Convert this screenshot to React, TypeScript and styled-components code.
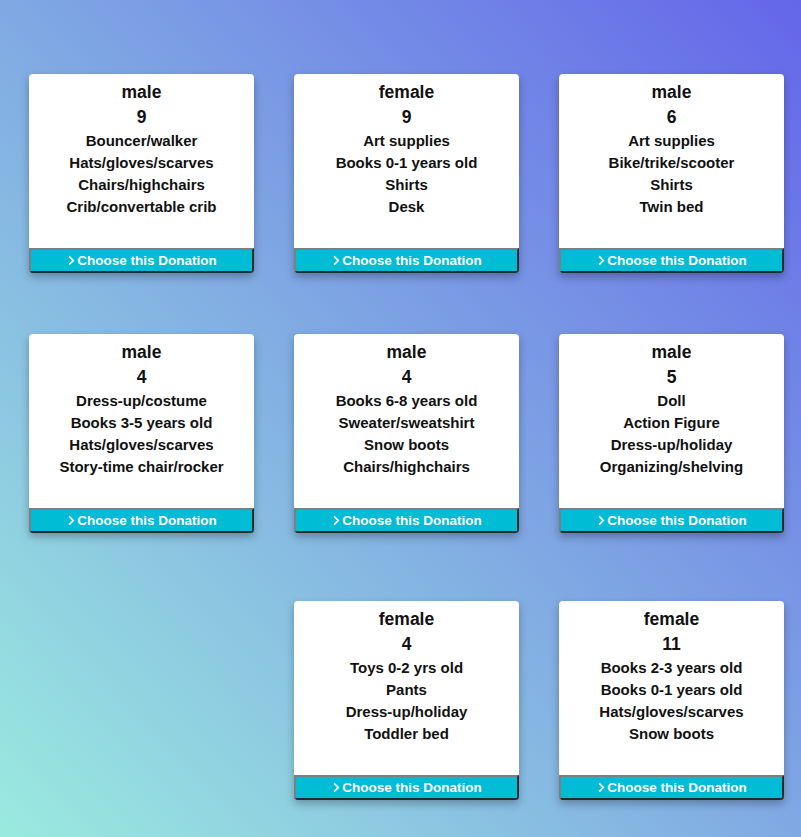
import React from 'react'
import styled, { createGlobalStyle } from 'styled-components'
import { FaChevronRight } from 'react-icons/fa'

const GlobalStyle = createGlobalStyle`
    html, body {
        margin: 0;
        padding: 0;
    }
    body {
        font-family: 'Liberation Sans', Arial, sans-serif;
        min-height: 837px;
        background: linear-gradient(to top right, #9aeadf 0%, #80a9e3 50%, #6466e9 100%);
        background-attachment: fixed;
    }
`

const Page = styled.main`
    width: 801px;
    height: 837px;
    box-sizing: border-box;
    padding: 74px 0 0 29px;
    overflow: hidden;
`

const Grid = styled.div`
    display: grid;
    grid-template-columns: repeat(3, 225px);
    column-gap: 40px;
    row-gap: 61px;
`

const Card = styled.div<{ $col?: number; $drop?: number }>`
    grid-column: ${(p) => p.$col ?? 'auto'};
    margin-top: ${(p) => p.$drop ?? 0}px;
    height: 199px;
    background: #fff;
    border-radius: 4px;
    box-shadow: 0 4px 9px rgba(0, 0, 0, 0.28);
    display: flex;
    flex-direction: column;
    overflow: hidden;
    color: #111;
    text-align: center;
`

const Body = styled.div`
    flex: 1;
    padding-top: 6px;
`

const Gender = styled.div`
    font-size: 17.5px;
    font-weight: bold;
    line-height: 25px;
`

const Age = styled.div`
    font-size: 17.5px;
    font-weight: bold;
    line-height: 25px;
`

const Item = styled.div`
    font-size: 15px;
    font-weight: bold;
    line-height: 22px;
`

const ChooseButton = styled.button`
    height: 25px;
    width: 100%;
    margin: 0;
    padding: 0;
    background: #00bcd4;
    color: #fff;
    font-family: 'Liberation Sans', Arial, sans-serif;
    font-size: 13.5px;
    font-weight: bold;
    border-style: solid;
    border-width: 2px;
    border-color: #7b7f82 #1d2b30 #1d2b30 #7b7f82;
    border-radius: 0;
    display: flex;
    align-items: center;
    justify-content: center;
    cursor: pointer;
`

type Donation = {
    gender: string
    age: number
    items: string[]
}

const donations: Donation[] = [
    { gender: 'male', age: 9, items: ['Bouncer/walker', 'Hats/gloves/scarves', 'Chairs/highchairs', 'Crib/convertable crib'] },
    { gender: 'female', age: 9, items: ['Art supplies', 'Books 0-1 years old', 'Shirts', 'Desk'] },
    { gender: 'male', age: 6, items: ['Art supplies', 'Bike/trike/scooter', 'Shirts', 'Twin bed'] },
    { gender: 'male', age: 4, items: ['Dress-up/costume', 'Books 3-5 years old', 'Hats/gloves/scarves', 'Story-time chair/rocker'] },
    { gender: 'male', age: 4, items: ['Books 6-8 years old', 'Sweater/sweatshirt', 'Snow boots', 'Chairs/highchairs'] },
    { gender: 'male', age: 5, items: ['Doll', 'Action Figure', 'Dress-up/holiday', 'Organizing/shelving'] },
    { gender: 'female', age: 4, items: ['Toys 0-2 yrs old', 'Pants', 'Dress-up/holiday', 'Toddler bed'] },
    { gender: 'female', age: 11, items: ['Books 2-3 years old', 'Books 0-1 years old', 'Hats/gloves/scarves', 'Snow boots'] },
]

const App = () => {
    return (
        <>
            <GlobalStyle />
            <Page>
                <Grid>
                    {donations.map((d, i) => (
                        <Card key={i} $col={i === 6 ? 2 : undefined} $drop={i >= 6 ? 7 : 0}>
                            <Body>
                                <Gender>{d.gender}</Gender>
                                <Age>{d.age}</Age>
                                {d.items.map((item) => (
                                    <Item key={item}>{item}</Item>
                                ))}
                            </Body>
                            <ChooseButton>
                                <FaChevronRight size={11} />
                                Choose this Donation
                            </ChooseButton>
                        </Card>
                    ))}
                </Grid>
            </Page>
        </>
    )
}

export default App
